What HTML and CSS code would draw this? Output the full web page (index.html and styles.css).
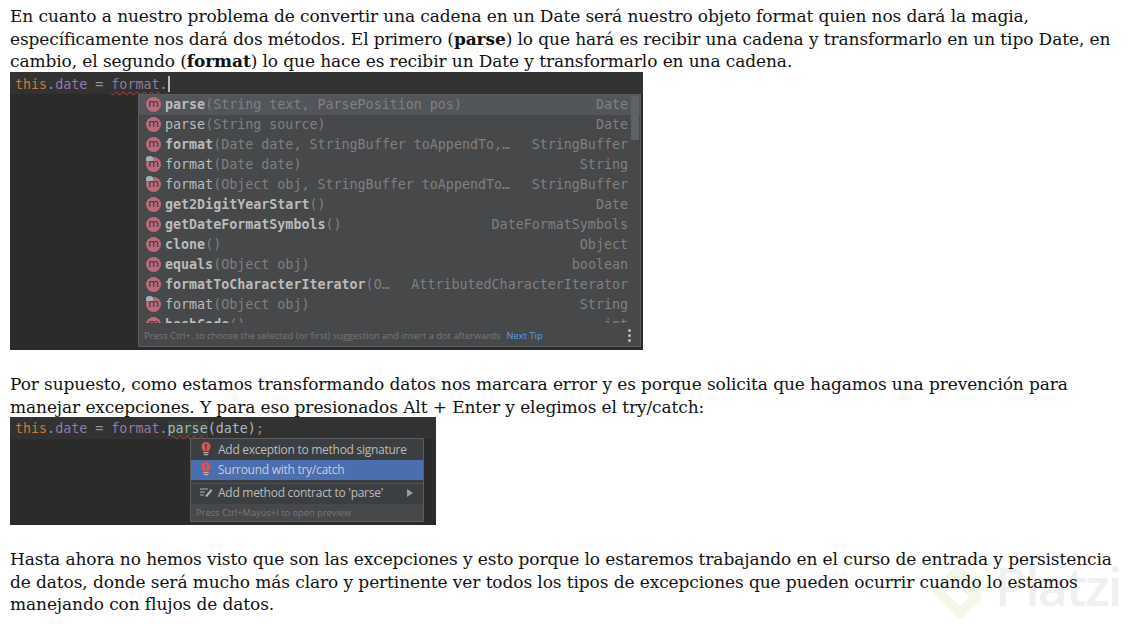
FILE: index.html
```html
<!DOCTYPE html>
<html lang="es">
<head>
<meta charset="utf-8">
<title>Date format</title>
<link rel="stylesheet" href="styles.css">
</head>
<body>
<div class="watermark" aria-hidden="true">
  <svg class="wm-logo" width="54" height="64" viewBox="0 0 54 64"><path d="M42 22 L27 9 L8 30 L30 51 L47 35 L36 25" fill="none" stroke="#f3f8e8" stroke-width="10" stroke-linejoin="round"/></svg>
  <span class="wm-text">Platzi</span>
</div>
<p class="text">En cuanto a nuestro problema de convertir una cadena en un Date será nuestro objeto format quien nos dará la magia,<br>específicamente nos dará dos métodos. El primero (<b>parse</b>) lo que hará es recibir una cadena y transformarlo en un tipo Date, en<br>cambio, el segundo (<b>format</b>) lo que hace es recibir un Date y transformarlo en una cadena.</p>
<div class="ide ide-one">
  <div class="code-line"><span class="kw">this</span><span class="dot">.</span><span class="field">date</span> <span class="dot">=</span> <span class="field-dim squiggle">format</span><span class="dot">.</span><span class="caret"></span></div>
  <div class="completion">
    <div class="list">
      <div class="row selected"><span class="m">m</span><b>parse</b><span class="args">(String text, ParsePosition pos)</span><span class="type">Date</span></div>
      <div class="row"><span class="m">m</span><span class="name">parse</span><span class="args">(String source)</span><span class="type">Date</span></div>
      <div class="row"><span class="m">m</span><b>format</b><span class="args">(Date date, StringBuffer toAppendTo,…</span><span class="type">StringBuffer</span></div>
      <div class="row"><span class="m up">m</span><span class="name">format</span><span class="args">(Date date)</span><span class="type">String</span></div>
      <div class="row"><span class="m up">m</span><span class="name">format</span><span class="args">(Object obj, StringBuffer toAppendTo…</span><span class="type">StringBuffer</span></div>
      <div class="row"><span class="m">m</span><b>get2DigitYearStart</b><span class="args">()</span><span class="type">Date</span></div>
      <div class="row"><span class="m">m</span><b>getDateFormatSymbols</b><span class="args">()</span><span class="type">DateFormatSymbols</span></div>
      <div class="row"><span class="m">m</span><b>clone</b><span class="args">()</span><span class="type">Object</span></div>
      <div class="row"><span class="m">m</span><b>equals</b><span class="args">(Object obj)</span><span class="type">boolean</span></div>
      <div class="row"><span class="m">m</span><b>formatToCharacterIterator</b><span class="args">(O…</span><span class="type">AttributedCharacterIterator</span></div>
      <div class="row"><span class="m up">m</span><span class="name">format</span><span class="args">(Object obj)</span><span class="type">String</span></div>
      <div class="row"><span class="m">m</span><b>hashCode</b><span class="args">()</span><span class="type">int</span></div>
      <div class="scrollbar"></div>
    </div>
    <div class="tip"><span>Press Ctrl+. to choose the selected (or first) suggestion and insert a dot afterwards</span><span class="next">Next Tip</span><span class="kebab"><i></i><i></i><i></i></span></div>
  </div>
</div>
<p class="text second">Por supuesto, como estamos transformando datos nos marcara error y es porque solicita que hagamos una prevención para<br>manejar excepciones. Y para eso presionados Alt + Enter y elegimos el try/catch:</p>
<div class="ide ide-two">
  <div class="code-line"><span class="kw">this</span><span class="dot">.</span><span class="field">date</span> <span class="dot">=</span> <span class="field">format</span><span class="dot">.</span><span class="call squiggle">parse</span><span class="plain">(date)</span><span class="kw">;</span></div>
  <div class="actions">
    <div class="action">
      <svg class="bulb" width="14" height="16" viewBox="0 0 14 16"><path d="M7 1a4.6 4.6 0 0 0-4.6 4.6c0 1.8 1.1 3 1.9 4.4h5.4c.8-1.4 1.9-2.6 1.9-4.4A4.6 4.6 0 0 0 7 1z" fill="#d9564f"/><rect x="6.2" y="3" width="1.6" height="3.6" fill="#3c3f41"/><rect x="6.2" y="7.4" width="1.6" height="1.4" fill="#3c3f41"/><rect x="4.3" y="11" width="5.4" height="1.2" fill="#afb1b3"/><rect x="4.8" y="13" width="4.4" height="1.2" fill="#afb1b3"/></svg>
      <span>Add exception to method signature</span>
    </div>
    <div class="action active">
      <svg class="bulb" width="14" height="16" viewBox="0 0 14 16"><path d="M7 1a4.6 4.6 0 0 0-4.6 4.6c0 1.8 1.1 3 1.9 4.4h5.4c.8-1.4 1.9-2.6 1.9-4.4A4.6 4.6 0 0 0 7 1z" fill="#d9564f"/><rect x="6.2" y="3" width="1.6" height="3.6" fill="#4b6eaf"/><rect x="6.2" y="7.4" width="1.6" height="1.4" fill="#4b6eaf"/><rect x="4.3" y="11" width="5.4" height="1.2" fill="#afb1b3"/><rect x="4.8" y="13" width="4.4" height="1.2" fill="#afb1b3"/></svg>
      <span>Surround with try/catch</span>
    </div>
    <div class="action third">
      <svg class="bulb" width="14" height="14" viewBox="0 0 14 14"><path d="M1 3h8M1 6h5M1 9h4" stroke="#afb1b3" stroke-width="1.2" fill="none"/><path d="M6 10 L12 3 L13.4 4.4 L8 11 Z" fill="#afb1b3"/></svg>
      <span>Add method contract to 'parse'</span>
      <span class="arrow"></span>
    </div>
    <div class="preview">Press Ctrl+Mayús+I to open preview</div>
  </div>
</div>
<p class="text third-text">Hasta ahora no hemos visto que son las excepciones y esto porque lo estaremos trabajando en el curso de entrada y persistencia<br>de datos, donde será mucho más claro y pertinente ver todos los tipos de excepciones que pueden ocurrir cuando lo estamos<br>manejando con flujos de datos.</p>
</body>
</html>
```
FILE: styles.css
```css
html, body { margin: 0; padding: 0; background: #fff; }
body { width: 1132px; height: 624px; overflow: hidden; padding: 5px 0 0 10px; box-sizing: border-box; position: relative; }
.text { margin: 0; font: 17px/22.5px "DejaVu Serif", serif; color: #111; white-space: nowrap; position: relative; letter-spacing: -0.1px; }
.text b { font-weight: 700; }
.second { margin-top: 23px; }
.third-text { margin-top: 23px; }
.ide { background: #2b2b2b; position: relative; font-family: "DejaVu Sans Mono", monospace; font-size: 13.33px; overflow: hidden; }
.ide-one { width: 633px; height: 278px; margin-top: -0.5px; }
.ide-two { width: 426px; height: 108px; margin-top: -1px; }
.code-line { background: #323232; height: 22px; line-height: 24px; padding-left: 5px; white-space: pre; color: #a9b7c6; }
.ide-one .code-line { line-height: 26px; }
.kw { color: #cc7832; }
.dot { color: #a9b7c6; opacity: .75; }
.field { color: #9876aa; }
.field-dim { color: #8d7a9e; }
.call { background: #344134; color: #a9b7c6; }
.plain { color: #a9b7c6; }
.squiggle { text-decoration: underline wavy #b3423c 1px; text-underline-offset: 2px; }
.caret { display: inline-block; width: 2px; height: 16px; background: #bbb; vertical-align: -3px; }
.completion { position: absolute; left: 128px; top: 22px; width: 503px; height: 253px; background: #46484a; border: 1px solid #5a5d5f; box-sizing: border-box; display: flex; flex-direction: column; }
.list { flex: 1; overflow: hidden; position: relative; min-height: 0; }
.row { height: 20px; box-sizing: border-box; display: flex; align-items: center; padding: 0 12px 1px 7px; color: #bbb; white-space: pre; }
.row.selected { background: #52565a; }
.row b, .name { color: #bbb; font-weight: 700; margin-left: 4px; }
.name { font-weight: 400; }
.args, .type { color: #808080; }
.type { margin-left: auto; }
.m { width: 15px; height: 15px; border-radius: 50%; background: #bd6a7c; color: #3a3030; font: 11px/14px "DejaVu Sans", sans-serif; text-align: center; position: relative; flex: none; }
.m.up::before { content: ""; position: absolute; left: 0; top: -1px; width: 7px; height: 5px; background: #a9b0b5; border-radius: 50% 50% 0 0; }
.scrollbar { position: absolute; right: 1px; top: 1px; width: 8px; height: 44px; background: #5f6264; }
.tip { height: 22px; flex: none; display: flex; align-items: center; padding-left: 5px; font: 9.35px "Open Sans", sans-serif; color: #787878; position: relative; white-space: pre; border-top: 1px solid #46484a; }
.next { color: #589df6; margin-left: 6px; }
.kebab { position: absolute; right: 9px; top: 5px; display: flex; flex-direction: column; gap: 2px; }
.kebab i { width: 3px; height: 3px; background: #bbb; border-radius: 50%; display: block; }
.actions { position: absolute; left: 180px; top: 21px; width: 234px; height: 84px; padding-top: 1px; background: #3c3f41; border: 1px solid #5a5d5f; box-sizing: border-box; font: 12px "Open Sans", sans-serif; letter-spacing: -0.27px; color: #bbb; }
.action { height: 20px; box-sizing: border-box; display: flex; align-items: center; padding: 0 0 2px 8px; gap: 5px; white-space: pre; position: relative; }
.action .bulb { flex: none; }
.action.active { background: #4b6eaf; color: #c8ccd4; }
.action.third { height: 21px; margin-top: 3px; padding-bottom: 3px; border-top: 1px solid #4f5254; }
.arrow { position: absolute; right: 10px; top: 5px; border-left: 6px solid #9a9c9e; border-top: 4px solid transparent; border-bottom: 4px solid transparent; }
.preview { background: #46484a; height: 17px; line-height: 17px; padding-left: 5px; font-size: 9.3px; letter-spacing: 0; color: #787878; }
.watermark { position: absolute; left: 930px; top: 562px; display: flex; align-items: flex-start; gap: 11px; height: 64px; }
.wm-text { font: 600 52px/60px "Open Sans", sans-serif; color: #f0f0f0; margin-top: -6px; letter-spacing: -1.8px; }
```
